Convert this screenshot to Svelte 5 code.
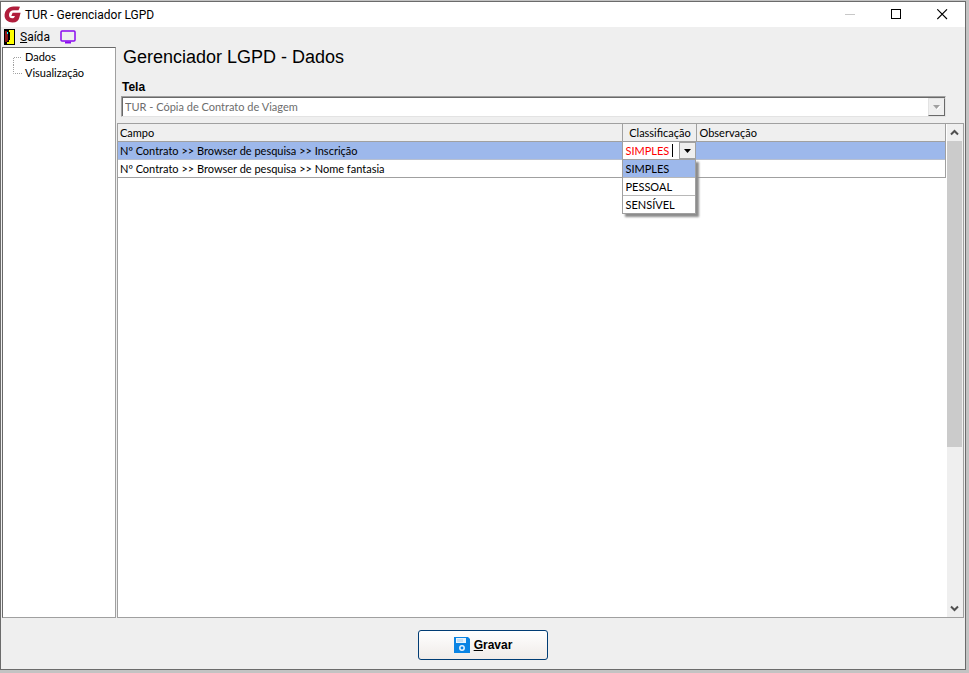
<script lang="ts">
  let sections = ['Dados', 'Visualização']
  let levels = ['SIMPLES', 'PESSOAL', 'SENSÍVEL']
  let rows = [
    { field: 'Nº Contrato >> Browser de pesquisa >> Inscrição', level: 'SIMPLES', note: '' },
    { field: 'Nº Contrato >> Browser de pesquisa >> Nome fantasia', level: '', note: '' },
  ]

  let selectedRow = 0
  let section = 'Dados'
  let listOpen = true

  function pickLevel(level: string) {
    rows[selectedRow].level = level
    listOpen = false
  }
</script>

<div class="window">
  <header class="title-bar">
    <svg class="logo" width="17" height="17" viewBox="0 0 17 17" aria-hidden="true">
      <path d="M16 .8C12 .2 7.500 .1 4.500 2 1.500 3.900 .2 7.400 .6 10.600 1.200 14.300 4.500 16.600 8.600 16.500c4-.1 6-1.800 6.600-4.500L16.600 6.800H8.600L7.300 10h3.600c-.4 1.600-1.300 2.300-2.700 2.300-2 0-3.200-1.300-3.200-3.300 0-2.900 2-4.700 5-4.700h4.500z" fill="#b01e3c" />
    </svg>
    <span class="caption">TUR - Gerenciador LGPD</span>
    <button class="control" aria-label="Minimizar" disabled>
      <svg width="11" height="11" viewBox="0 0 11 11"><path d="M0 5.500h10" stroke="#c8c8c8" /></svg>
    </button>
    <button class="control" aria-label="Maximizar">
      <svg width="11" height="11" viewBox="0 0 11 11"><rect x=".5" y=".5" width="9" height="9" fill="none" stroke="#000" /></svg>
    </button>
    <button class="control" aria-label="Fechar">
      <svg width="11" height="11" viewBox="0 0 11 11"><path d="M.3.3l9.700 9.700M10 .3L.3 10" stroke="#000" stroke-width="1.100" /></svg>
    </button>
  </header>

  <nav class="toolbar">
    <button class="tool">
      <svg width="11" height="16" viewBox="0 0 11 16" aria-hidden="true">
        <path d="M0 0h11v16H0z" fill="#000" />
        <path d="M5 1h5v14H3v-2h2v-2h1V3H5z" fill="#ff0" />
        <path d="M1 2h2v1h1v9H3v1H1z" fill="#8c1414" />
        <path d="M3 3h1v2H3z" fill="#0ff" />
      </svg>
      <span><u>S</u>aída</span>
    </button>
    <button class="tool" aria-label="Tela">
      <svg width="16" height="14" viewBox="0 0 16 14" aria-hidden="true">
        <rect x="1" y="1" width="14" height="10" rx="1" fill="none" stroke="#8a0af0" stroke-width="1.500" />
        <path d="M5 12.500h6" stroke="#8a0af0" stroke-width="2" />
      </svg>
    </button>
  </nav>

  <div class="workspace">
    <ul class="tree">
      {#each sections as name, i}
        <li>
          <svg width="9" height="16" viewBox="0 0 9 16" aria-hidden="true">
            <path d={i === 0 ? 'M.5 16V8.5H9' : 'M.5 0V8.5H9'} fill="none" stroke="#a0a0a0" stroke-dasharray="1 1" />
          </svg>
          <button onclick={() => (section = name)}>{name}</button>
        </li>
      {/each}
    </ul>

    <main>
      <h1>Gerenciador LGPD - {section}</h1>

      <div class="screen">
        <label for="screen">Tela</label>
        <div class="combo">
          <select id="screen" disabled>
            <option>TUR - Cópia de Contrato de Viagem</option>
          </select>
          <span class="combo-arrow">
            <svg width="8" height="5" viewBox="0 0 8 5" aria-hidden="true">
              <path d="M1 1h7L4.500 5z" fill="#fff" />
              <path d="M0 0h7L3.500 4z" fill="#a0a0a0" />
            </svg>
          </span>
        </div>
      </div>

      <div class="grid">
        <div class="grid-body">
          <table>
            <colgroup>
              <col class="col-field" />
              <col class="col-level" />
              <col />
            </colgroup>
            <thead>
              <tr>
                <th>Campo</th>
                <th class="center">Classificação</th>
                <th>Observação</th>
              </tr>
            </thead>
            <tbody>
              {#each rows as row, i}
                <tr class:selected={i === selectedRow}>
                  <td>{row.field}</td>
                  {#if i === selectedRow}
                    <td class="editing">
                      <div class="editor">
                        <input type="text" aria-label="Classificação" bind:value={row.level} />
                        <button aria-label="Abrir lista" onclick={() => (listOpen = !listOpen)}>
                          <svg width="7" height="4" viewBox="0 0 7 4" aria-hidden="true"><path d="M0 0h7L3.500 4z" /></svg>
                        </button>
                        {#if listOpen}
                          <ul class="levels">
                            {#each levels as level}
                              <li class:current={level === row.level}>
                                <button onclick={() => pickLevel(level)}>{level}</button>
                              </li>
                            {/each}
                          </ul>
                        {/if}
                      </div>
                    </td>
                  {:else}
                    <td>{row.level}</td>
                  {/if}
                  <td>{row.note}</td>
                </tr>
              {/each}
            </tbody>
          </table>
        </div>

        <div class="scrollbar">
          <button aria-label="Rolar para cima">
            <svg width="9" height="7" viewBox="0 0 9 7"><path d="M1 5.500L4.500 2 8 5.500" /></svg>
          </button>
          <div class="track"><div class="thumb"></div></div>
          <button aria-label="Rolar para baixo">
            <svg width="9" height="7" viewBox="0 0 9 7"><path d="M1 1.500L4.500 5 8 1.500" /></svg>
          </button>
        </div>
      </div>
    </main>
  </div>

  <footer>
    <button class="save">
      <svg width="16" height="16" viewBox="0 0 16 16" aria-hidden="true">
        <path d="M0 0h14l2 2v14H0z" fill="#0a84e4" />
        <path d="M2 1h10v5H2z" fill="#e8f4fd" />
        <path d="M3 2h6v3H3z" fill="#c5def2" />
        <circle cx="8" cy="11" r="2.200" fill="#0a84e4" stroke="#e8f4fd" stroke-width="1.500" />
      </svg>
      <span><u>G</u>ravar</span>
    </button>
  </footer>
</div>

<style>
  :global(body) {
    margin: 0;
    background: #c3c3c3;
  }

  :global(#app) {
    padding: 1px 0 3px;
  }

  .window {
    box-sizing: border-box;
    display: flex;
    flex-direction: column;
    min-height: calc(100vh - 4px);
    margin: 0 3px 0 0;
    border: 1px solid #6b6b6b;
    background: #efefef;
    color: #000;
    font: 11px/16px Lato, "Liberation Sans", sans-serif;
  }

  button {
    padding: 0;
    border: 0;
    background: none;
    color: inherit;
    font: inherit;
  }

  ul {
    margin: 0;
    padding: 0;
    list-style: none;
  }

  .title-bar {
    display: flex;
    align-items: center;
    height: 25px;
    padding-left: 3px;
    background: #fff;
    font: 12px/16px Roboto, "Liberation Sans", sans-serif;
  }

  .caption {
    flex: 1;
    margin-left: 4px;
  }

  .control {
    display: flex;
    align-items: center;
    justify-content: center;
    width: 46px;
    height: 25px;
  }

  .toolbar {
    display: flex;
    align-items: center;
    gap: 10px;
    height: 20px;
    padding-left: 3px;
    font: 12px/16px Roboto, "Liberation Sans", sans-serif;
  }

  .tool {
    display: flex;
    align-items: center;
    gap: 5px;
  }

  .workspace {
    flex: 1;
    display: flex;
    gap: 1px;
    padding: 0 1px;
  }

  .tree {
    box-sizing: border-box;
    width: 114px;
    padding: 1px 0 0 10px;
    border: 1px solid #a0a0a0;
    border-top-color: #696969;
    border-left-color: #696969;
    background: #fff;
  }

  .tree li {
    display: flex;
    gap: 3px;
    height: 16px;
  }

  main {
    flex: 1;
    display: flex;
    flex-direction: column;
    min-width: 0;
  }

  h1 {
    margin: 0 6px;
    font: 18px/20px "Liberation Sans", Arial, sans-serif;
  }

  .screen {
    padding: 12px 18px 6px 4px;
  }

  label {
    display: block;
    padding-left: 1px;
    font: bold 12px/16px "Liberation Sans", Arial, sans-serif;
  }

  .combo {
    display: flex;
    box-sizing: border-box;
    height: 21px;
    margin-top: 1px;
    border: 1px solid #a0a0a0;
    border-right-color: #e3e3e3;
    border-bottom-color: #e3e3e3;
    box-shadow: inset 1px 1px #696969;
    background: #fff;
  }

  select {
    flex: 1;
    margin: 1px 0 0 1px;
    padding: 0 2px;
    border: 0;
    appearance: none;
    background: #fff;
    color: #6d6d6d;
    opacity: 1;
    font: inherit;
  }

  .combo-arrow {
    display: flex;
    align-items: center;
    justify-content: center;
    box-sizing: border-box;
    width: 17px;
    margin-top: 1px;
    border: 1px solid #e3e3e3;
    border-right-color: #696969;
    border-bottom-color: #696969;
    background: #efefef;
  }

  .grid {
    flex: 1;
    display: flex;
    gap: 1px;
    border: 1px solid #a0a0a0;
    background: #fff;
  }

  .grid-body {
    flex: 1;
  }

  table {
    width: 100%;
    table-layout: fixed;
    border-spacing: 0;
    border-right: 1px solid #a0a0a0;
  }

  .col-field {
    width: 61%;
  }

  .col-level {
    width: 74px;
  }

  th,
  td {
    box-sizing: border-box;
    height: 18px;
    padding: 1px 2px 0;
    border-bottom: 1px solid #a0a0a0;
    font-weight: 400;
    line-height: 16px;
    text-align: left;
    white-space: nowrap;
  }

  th {
    background: #efefef;
  }

  th + th {
    border-left: 1px solid #a0a0a0;
  }

  .center {
    padding: 1px 0 0;
    text-align: center;
  }

  .selected td {
    background: #9db8eb;
    border-color: #b8c0d0;
  }

  .selected .editing {
    padding: 0;
    border-left: 1px solid #a0a0a0;
    background: #fff;
  }

  .editor {
    position: relative;
    display: flex;
    justify-content: space-between;
    height: 17px;
  }

  input {
    box-sizing: border-box;
    width: 50px;
    margin: 2px 0;
    padding: 0 0 0 2px;
    border: 0;
    border-right: 1px solid #000;
    outline: 0;
    color: #f00;
    font: inherit;
  }

  .editor > button {
    display: flex;
    align-items: center;
    justify-content: center;
    box-sizing: border-box;
    width: 17px;
    border: 1px solid #a0a0a0;
    background: #efefef;
  }

  .levels {
    position: absolute;
    top: 100%;
    left: -1px;
    right: 0;
    border: 1px solid #a0a0a0;
    background: #fff;
    box-shadow: 3px 3px 2px #8c8c8c;
  }

  .levels button {
    width: 100%;
    height: 17px;
    padding: 1px 2px 0;
    text-align: left;
  }

  .levels li {
    height: 17px;
  }

  .levels li + li {
    border-top: 1px solid #b8b8b8;
  }

  .levels .current {
    background: #9db8eb;
  }

  .scrollbar {
    display: flex;
    flex-direction: column;
    width: 16px;
    background: #efefef;
  }

  .scrollbar button {
    display: flex;
    align-items: center;
    justify-content: center;
    width: 15px;
    height: 17px;
  }

  .scrollbar path {
    fill: none;
    stroke: #505050;
    stroke-width: 2;
  }

  .track {
    flex: 1;
  }

  .thumb {
    height: 66.6%;
    margin-right: 1px;
    background: #cbcbcb;
  }

  footer {
    display: flex;
    justify-content: center;
    padding: 12px 0 9px;
  }

  .save {
    display: flex;
    align-items: center;
    justify-content: center;
    gap: 4px;
    box-sizing: border-box;
    width: 130px;
    height: 30px;
    border: 1px solid #003c74;
    border-radius: 3px;
    background: linear-gradient(#fff, #f0ebe8);
    font: bold 12px/16px "Liberation Sans", Arial, sans-serif;
  }
</style>
